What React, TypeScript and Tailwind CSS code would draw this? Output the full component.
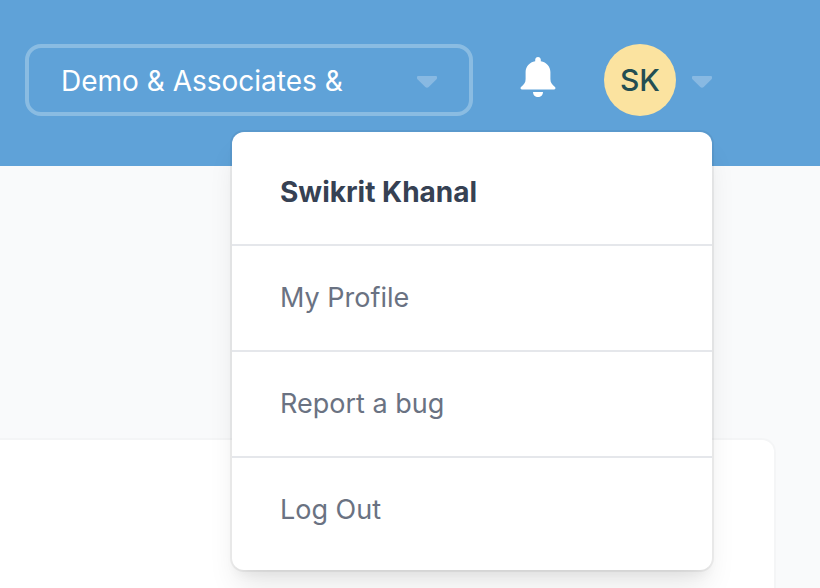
import { useState } from "react";

const menuItems = [
  { label: "My Profile", href: "#profile" },
  { label: "Report a bug", href: "#report" },
  { label: "Log Out", href: "#logout" },
];

function Caret({ className = "" }: { className?: string }) {
  return (
    <svg
      className={`w-5 h-3 text-[#88b9e2] ${className}`}
      viewBox="0 0 20 12"
      fill="currentColor"
      aria-hidden="true"
    >
      <path d="M1 0h18c1 0 1.300 .9 1 2.200-.1.500-.3.800-.7 1.200l-7.600 7.700c-1 1-2.400 1-3.400 0L.7 3.400C.3 3 .1 2.700 0 2.200-.3.900 0 0 1 0z" />
    </svg>
  );
}

function BellIcon() {
  return (
    <svg className="w-9 h-10" viewBox="0 0 36 40" fill="currentColor" aria-hidden="true">
      <path d="M18 0c-1.600 0-2.800 1.200-2.800 2.800v1.400C9.400 5.200 5.600 9.400 5.600 15v7c0 3.500-1.500 5.600-4.300 7.700-.8.600-.9 1.500-.6 2.100.2.500.7.700 1.300.7h32c.6 0 1.100-.2 1.300-.7.300-.6.200-1.500-.6-2.100-2.800-2.100-4.300-4.200-4.300-7.700V15c0-5.600-3.800-9.800-9.600-10.800V2.800C20.800 1.200 19.600 0 18 0z" />
      <path d="M13 35h10c0 3-2.200 5-5 5s-5-2-5-5z" />
    </svg>
  );
}

function UserMenu() {
  return (
    <div className="absolute right-0 top-full z-10 mt-4 w-[480px] rounded-xl bg-white py-2 text-[27px] leading-10 shadow-[0_0_0_2px_rgba(0,0,0,0.05),0_20px_30px_-6px_rgba(0,0,0,0.1),0_8px_12px_-4px_rgba(0,0,0,0.05)]">
      <div className="px-12 py-8 text-[28px] leading-10 font-bold text-gray-700">Swikrit Khanal</div>
      {menuItems.map((item) => (
        <a
          key={item.label}
          href={item.href}
          className="block border-t-2 border-gray-200 px-12 py-8 text-gray-500"
        >
          {item.label}
        </a>
      ))}
    </div>
  );
}

export default function App() {
  const [open, setOpen] = useState(true);

  return (
    <div className="flex min-h-screen flex-col bg-gray-50 font-['Inter',sans-serif]">
      <header className="flex items-center bg-[#5fa2d8] pt-11 pb-[50px] pl-[25px]">
        <div className="relative w-[448px]">
          <select
            aria-label="Organization"
            className="h-[72px] w-full appearance-none rounded-2xl border-4 border-[#8abce2] bg-transparent px-8 pt-0.5 text-[28px] text-white"
          >
            <option>Demo &amp; Associates &amp;</option>
          </select>
          <Caret className="pointer-events-none absolute top-8 right-9" />
        </div>

        <button type="button" aria-label="Notifications" className="mb-1.5 ml-[47px] text-white">
          <BellIcon />
        </button>

        <div className="relative ml-12">
          <button
            type="button"
            aria-expanded={open}
            aria-label="User menu"
            onClick={() => setOpen(!open)}
            className="flex items-center gap-4"
          >
            <span className="flex size-[72px] items-center justify-center rounded-full bg-[#fbe3a0] text-[30px] font-medium text-[#234e52]">
              SK
            </span>
            <Caret className="mt-1" />
          </button>
          {open && <UserMenu />}
        </div>
      </header>

      <main className="flex flex-1 flex-col pt-[274px] pr-[46px]">
        <section className="flex-1 rounded-tr-xl bg-white shadow-[0_0_0_2px_rgba(0,0,0,0.02)]" />
      </main>
    </div>
  );
}
